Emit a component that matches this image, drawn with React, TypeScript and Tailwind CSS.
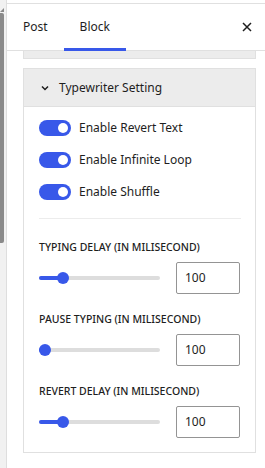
import { useState } from "react";

function Toggle({ label }: { label: string }) {
  const [on, setOn] = useState(true);
  return (
    <label className="flex items-center gap-[8px] h-[16px] cursor-pointer" onClick={() => setOn(!on)}>
      <span
        className={`relative shrink-0 w-[32px] h-[16px] rounded-full ${on ? "bg-[#3858e9]" : "bg-gray-300"}`}
      >
        <span
          className={`absolute top-[3px] w-[10px] h-[10px] rounded-full bg-white ${on ? "left-[19px]" : "left-[3px]"}`}
        />
      </span>
      <span className="text-[12px] leading-none text-[#1e1e1e] whitespace-nowrap">{label}</span>
    </label>
  );
}

function RangeRow({ label, pos }: { label: string; pos: number }) {
  return (
    <div className="flex flex-col">
      <div className="text-[10.5px] leading-[14px] font-medium text-[#1e1e1e] uppercase whitespace-nowrap">{label}</div>
      <div className="flex items-center mt-[8px]">
        <div className="relative shrink-0 w-[121px] h-[4px] rounded-full bg-[#dddddd]">
          <div className="absolute left-0 top-0 h-[4px] rounded-full bg-[#3858e9]" style={{ width: pos }} />
          <div
            className="absolute top-[-4px] w-[12px] h-[12px] rounded-full bg-[#3858e9]"
            style={{ left: pos - 6 }}
          />
        </div>
        <div className="ml-[16px] shrink-0 w-[64px] h-[32px] border border-[#949494] rounded-[2px] flex items-center pl-[8px] text-[12px] text-[#1e1e1e]">
          100
        </div>
      </div>
    </div>
  );
}

export default function App() {
  return (
    <div
      className="w-[265px] h-[468px] flex bg-white overflow-hidden"
      style={{ fontFamily: '"Noto Sans", "Open Sans", sans-serif' }}
    >
      {/* scrollbar */}
      <div className="w-[7px] shrink-0 bg-[#f1f1f1] border-r border-[#dedede] relative">
        <div className="absolute left-0 top-[8px] w-0 h-0 border-l-[4px] border-l-transparent border-b-[4px] border-b-[#8a8a8a]" />
        <div className="absolute left-0 top-[13px] w-[4px] h-[230px] bg-[#8a8a8a] rounded-r-[2px]" />
      </div>

      <div className="w-[258px] shrink-0 flex flex-col pt-[3px]">
        {/* tabs */}
        <div className="h-[48px] border-t border-b border-[#e0e0e0] flex items-stretch">
          <div className="px-[16px] flex items-center text-[12px] text-[#1e1e1e]">Post</div>
          <div className="relative px-[16px] flex items-center text-[12px] text-[#1e1e1e]">
            Block
            <div className="absolute left-0 right-0 bottom-[-1px] h-[3px] bg-[#3858e9]" />
          </div>
          <div className="ml-auto mr-[12px] flex items-center">
            <svg width="12" height="12" viewBox="0 0 12 12" fill="none" stroke="#1e1e1e" strokeWidth="1.5">
              <path d="M2 2l8 8M10 2l-8 8" />
            </svg>
          </div>
        </div>

        <div className="pl-[16px] pr-[9px] flex flex-col">
          {/* previous panel stub */}
          <div className="h-[8px] bg-[#ececec] border border-t-0 border-[#e0e0e0]" />

          {/* typewriter panel */}
          <div className="mt-[9px] border border-[#e0e0e0]">
            <div className="h-[38px] bg-[#ececec] border-b border-[#e0e0e0] flex items-center pl-[16px] gap-[9px]">
              <svg width="10" height="10" viewBox="0 0 10 10" fill="none" stroke="#1e1e1e" strokeWidth="1.5">
                <path d="M2 3.5l3 3 3-3" />
              </svg>
              <span className="text-[12px] text-[#1e1e1e]">Typewriter Setting</span>
            </div>

            <div className="pl-[15px] pr-[14px] pt-[13px] pb-[14px] flex flex-col">
              <div className="flex flex-col gap-[16px]">
                <Toggle label="Enable Revert Text" />
                <Toggle label="Enable Infinite Loop" />
                <Toggle label="Enable Shuffle" />
              </div>
              <div className="h-px bg-[#ececec] mt-[18px] mb-[21px]" />
              <div className="flex flex-col gap-[18px]">
                <RangeRow label="Typing Delay (in milisecond)" pos={24} />
                <RangeRow label="Pause Typing (in milisecond)" pos={6} />
                <RangeRow label="Revert Delay (in milisecond)" pos={24} />
              </div>
            </div>
          </div>
        </div>
      </div>
    </div>
  );
}
